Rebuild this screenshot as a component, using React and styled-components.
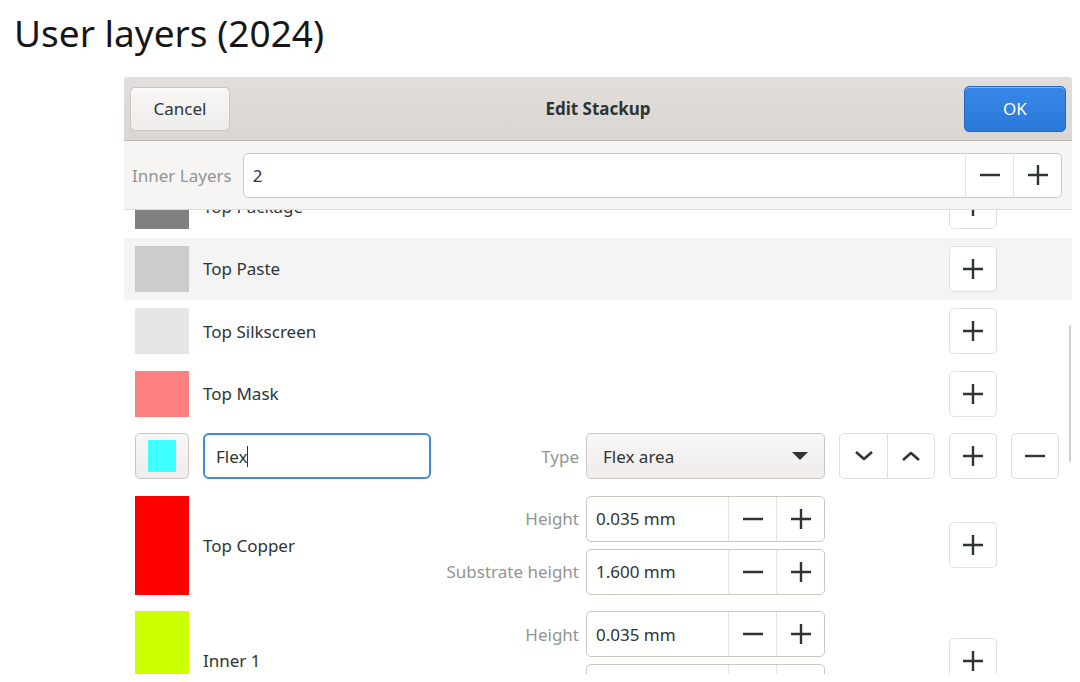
import React, { useLayoutEffect, useRef } from 'react'
import styled, { createGlobalStyle } from 'styled-components'

const GlobalStyle = createGlobalStyle`
  html, body {
    margin: 0;
    background: #fff;
  }
  body {
    font-family: "Noto Sans", "Open Sans", sans-serif;
    color: #2e3436;
  }
`

const layers = [
  { name: 'Top Package', color: '#808080' },
  { name: 'Top Paste', color: '#cccccc', hover: true },
  { name: 'Top Silkscreen', color: '#e6e6e6' },
  { name: 'Top Mask', color: '#ff8080' },
]

const copperLayers = [
  { name: 'Top Copper', color: '#ff0000', fields: [['Height', '0.035 mm'], ['Substrate height', '1.600 mm']] },
  { name: 'Inner 1', color: '#ccff00', fields: [['Height', '0.035 mm'], ['Substrate height', '0.200 mm']] },
]

const PlusIcon = () => (
  <svg width="20" height="20" viewBox="0 0 20 20">
    <path d="M10 0v20M0 10h20" stroke="#2e3436" strokeWidth="2.4" fill="none" />
  </svg>
)

const MinusIcon = () => (
  <svg width="20" height="20" viewBox="0 0 20 20">
    <path d="M0 10h20" stroke="#2e3436" strokeWidth="2.4" fill="none" />
  </svg>
)

const ChevronIcon = ({ up }) => (
  <svg width="20" height="10" viewBox="0 0 20 10">
    <polyline
      points={up ? '2,9 10,2 18,9' : '2,1 10,8 18,1'}
      stroke="#2e3436" strokeWidth="2.6" fill="none" strokeLinejoin="round"
    />
  </svg>
)

const TriangleIcon = () => (
  <svg width="16" height="8" viewBox="0 0 16 8">
    <polygon points="0,0 16,0 8,8" fill="#2e3436" />
  </svg>
)

const Page = styled.div`
  width: 1080px;
  height: 682px;
  overflow: hidden;
  display: flex;
  flex-direction: column;
`

const Title = styled.h1`
  margin: 0;
  height: 77px;
  box-sizing: border-box;
  padding: 9px 0 0 14px;
  font-size: 37px;
  font-weight: 400;
  line-height: 48px;
  color: #161616;
`

const Window = styled.div`
  position: relative;
  margin-left: 124px;
  width: 948px;
  height: 597px;
  display: flex;
  flex-direction: column;
  background: #fff;
  overflow: hidden;
  border-radius: 3px 3px 0 0;
  font-size: 17px;
`

const HeaderBar = styled.header`
  flex: none;
  display: grid;
  grid-template-columns: 1fr auto 1fr;
  align-items: center;
  height: 63px;
  padding: 0 6px;
  background: linear-gradient(#e1dedb, #dad6d2);
  border-bottom: 1px solid #bfb8b1;
`

const HeaderTitle = styled.div`
  font-weight: 700;
  font-size: 17px;
`

const Button = styled.button`
  justify-self: ${p => (p.$end ? 'end' : 'start')};
  width: ${p => p.$w}px;
  height: ${p => p.$h}px;
  border-radius: 5px;
  font-family: inherit;
  font-size: 17px;
  border: 1px solid ${p => (p.$suggested ? '#1b6acb' : '#cdc7c2')};
  background: ${p => (p.$suggested ? 'linear-gradient(#3987e6, #2a79d8)' : 'linear-gradient(#f8f7f6, #efedec)')};
  color: ${p => (p.$suggested ? '#fff' : '#2e3436')};
  box-shadow: inset 0 1px rgba(255, 255, 255, 0.4);
`

const InnerBar = styled.div`
  flex: none;
  display: flex;
  align-items: center;
  gap: 11px;
  height: 68px;
  padding: 0 10px 0 8px;
  background: #f6f5f4;
  border-bottom: 1px solid #dedad6;
`

const Label = styled.span`
  color: #929595;
  white-space: nowrap;
`

const Entry = styled.div`
  flex: 1;
  display: flex;
  align-items: stretch;
  height: 45px;
  box-sizing: border-box;
  background: #fff;
  border: 1px solid #cdc7c2;
  border-radius: 5px;
  overflow: hidden;
`

const Spin = styled(Entry)`
  flex: none;
  width: 239px;
  height: 46px;
`

const EntryText = styled.div`
  flex: 1;
  display: flex;
  align-items: center;
  padding-left: 9px;
`

const SpinButton = styled.div`
  width: 47px;
  display: flex;
  align-items: center;
  justify-content: center;
  border-left: 1px solid #e6e3e0;
`

const Scroller = styled.div`
  flex: 1;
  overflow: hidden;
`

const Row = styled.div`
  display: grid;
  grid-template-columns: 54px 228px 380px 96px 48px 48px;
  column-gap: 14px;
  align-items: center;
  padding: 8.25px 13px 8.25px 11px;
  background: ${p => (p.$hover ? '#f4f4f4' : 'transparent')};
`

const Swatch = styled.div`
  align-self: stretch;
  min-height: 46px;
  background: ${p => p.$color};
`

const Name = styled.div`
  white-space: nowrap;
`

const ColorButton = styled.div`
  height: 46px;
  box-sizing: border-box;
  display: flex;
  align-items: center;
  justify-content: center;
  border: 1px solid #cdc7c2;
  border-radius: 5px;
  background: linear-gradient(#f8f7f6, #efedec);
`

const ColorChip = styled.div`
  width: 28px;
  height: 32px;
  background: ${p => p.$color};
`

const FocusEntry = styled.div`
  height: 46px;
  box-sizing: border-box;
  display: flex;
  align-items: center;
  padding-left: 11px;
  border: 2px solid #3d8ae5;
  border-radius: 6px;
  background: #fff;
`

const Caret = styled.span`
  display: inline-block;
  width: 1px;
  height: 21px;
  background: #2e3436;
`

const Fields = styled.div`
  grid-column: 3;
  display: flex;
  flex-direction: column;
  gap: 7px;
`

const Field = styled.div`
  display: flex;
  align-items: center;
  justify-content: flex-end;
  gap: 7px;
`

const Dropdown = styled.div`
  width: 239px;
  height: 46px;
  box-sizing: border-box;
  display: flex;
  align-items: center;
  justify-content: space-between;
  padding: 0 16px;
  border: 1px solid #cdc7c2;
  border-radius: 5px;
  background: linear-gradient(#f8f7f6, #efedec);
`

const MoveGroup = styled.div`
  grid-column: 4;
  height: 46px;
  box-sizing: border-box;
  display: grid;
  grid-template-columns: 1fr 1fr;
  border: 1px solid #e2dfdc;
  border-radius: 5px;
  background: #fff;
`

const MoveHalf = styled.div`
  display: flex;
  align-items: center;
  justify-content: center;
  & + & {
    border-left: 1px solid #e2dfdc;
  }
`

const IconButton = styled.div`
  grid-column: ${p => p.$col};
  height: 46px;
  box-sizing: border-box;
  display: flex;
  align-items: center;
  justify-content: center;
  border: 1px solid #e2dfdc;
  border-radius: 5px;
  background: #fff;
`

const ScrollIndicator = styled.div`
  position: absolute;
  right: 1px;
  top: 248px;
  width: 2px;
  height: 137px;
  border-radius: 1px;
  background: #cfcfcf;
`

export default function App() {
  const scroller = useRef(null)

  useLayoutEffect(() => {
    if (scroller.current) scroller.current.scrollTop = 35
  }, [])

  return (
    <Page>
      <GlobalStyle />
      <Title>User layers (2024)</Title>
      <Window>
        <HeaderBar>
          <Button $w={100} $h={44}>Cancel</Button>
          <HeaderTitle>Edit Stackup</HeaderTitle>
          <Button $w={102} $h={46} $suggested $end>OK</Button>
        </HeaderBar>

        <InnerBar>
          <Label>Inner Layers</Label>
          <Entry>
            <EntryText>2</EntryText>
            <SpinButton><MinusIcon /></SpinButton>
            <SpinButton><PlusIcon /></SpinButton>
          </Entry>
        </InnerBar>

        <Scroller ref={scroller}>
          {layers.map(l => (
            <Row key={l.name} $hover={l.hover}>
              <Swatch $color={l.color} />
              <Name>{l.name}</Name>
              <IconButton $col={5}><PlusIcon /></IconButton>
            </Row>
          ))}

          <Row>
            <ColorButton><ColorChip $color="#40ffff" /></ColorButton>
            <FocusEntry>Flex<Caret /></FocusEntry>
            <Fields>
              <Field>
                <Label>Type</Label>
                <Dropdown>
                  <span>Flex area</span>
                  <TriangleIcon />
                </Dropdown>
              </Field>
            </Fields>
            <MoveGroup>
              <MoveHalf><ChevronIcon /></MoveHalf>
              <MoveHalf><ChevronIcon up /></MoveHalf>
            </MoveGroup>
            <IconButton $col={5}><PlusIcon /></IconButton>
            <IconButton $col={6}><MinusIcon /></IconButton>
          </Row>

          {copperLayers.map(l => (
            <Row key={l.name}>
              <Swatch $color={l.color} />
              <Name>{l.name}</Name>
              <Fields>
                {l.fields.map(([label, value]) => (
                  <Field key={label}>
                    <Label>{label}</Label>
                    <Spin>
                      <EntryText>{value}</EntryText>
                      <SpinButton><MinusIcon /></SpinButton>
                      <SpinButton><PlusIcon /></SpinButton>
                    </Spin>
                  </Field>
                ))}
              </Fields>
              <IconButton $col={5}><PlusIcon /></IconButton>
            </Row>
          ))}
        </Scroller>

        <ScrollIndicator />
      </Window>
    </Page>
  )
}
